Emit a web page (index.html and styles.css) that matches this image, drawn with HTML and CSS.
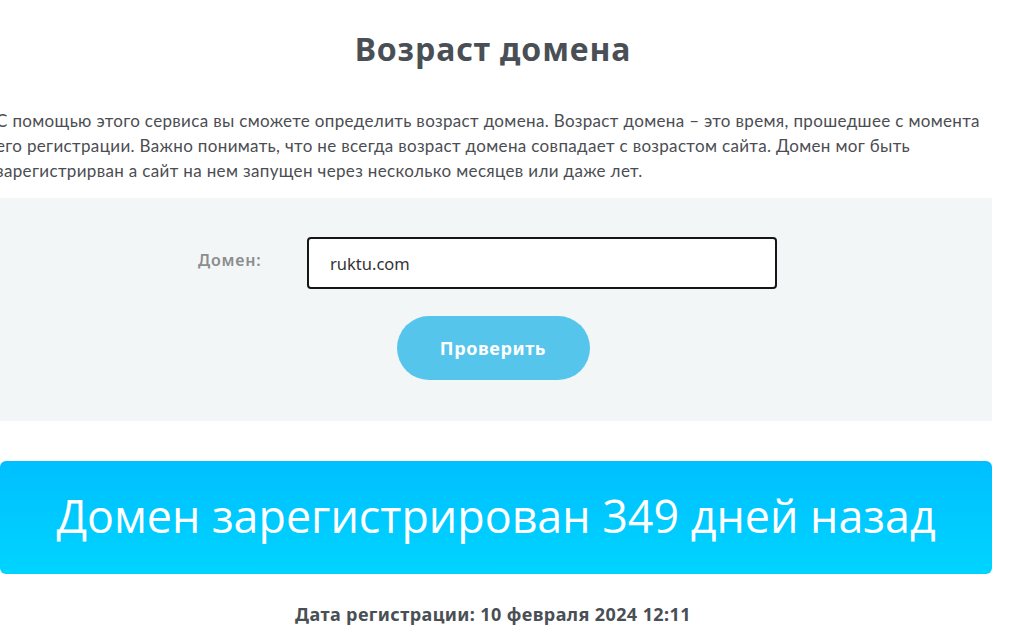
FILE: index.html
```html
<!DOCTYPE html>
<html lang="ru">
<head>
<meta charset="utf-8">
<title>Возраст домена</title>
<link rel="stylesheet" href="styles.css">
</head>
<body>
<main class="page">
  <h1 class="title">Возраст домена</h1>
  <p class="intro">С помощью этого сервиса вы сможете определить возраст домена. Возраст домена – это время, прошедшее с момента его регистрации. Важно понимать, что не всегда возраст домена совпадает с возрастом сайта. Домен мог быть зарегистрирван а сайт на нем запущен через несколько месяцев или даже лет.</p>
  <form class="check">
    <div class="row">
      <label class="label" for="domain">Домен:</label>
      <input class="field" id="domain" type="text" value="ruktu.com">
    </div>
    <button class="btn" type="button">Проверить</button>
  </form>
  <div class="result">Домен зарегистрирован 349 дней назад</div>
  <p class="date">Дата регистрации: 10 февраля 2024 12:11</p>
</main>
</body>
</html>
```
FILE: styles.css
```css
html, body {
  margin: 0;
  padding: 0;
  background: #fff;
  overflow: hidden;
}
.page {
  width: 998px;
  margin-left: -6px;
  font-family: "Open Sans", "Noto Sans", sans-serif;
  color: #4a4f55;
}
.title {
  margin: 0;
  padding-top: 29px;
  text-align: center;
  font-family: "Noto Sans", sans-serif;
  font-weight: 700;
  font-size: 32px;
  letter-spacing: 0.9px;
  line-height: 40px;
  color: #4a4f55;
}
.intro {
  margin: 39px 0 0;
  padding-left: 2px;
  font-family: "Lato", sans-serif;
  font-size: 17px;
  letter-spacing: 0.34px;
  line-height: 25px;
  color: #4b4d52;
}
.check {
  margin-top: 15px;
  margin-left: 6px;
  background: #f3f6f7;
  height: 223px;
  box-sizing: border-box;
  padding-top: 39px;
  display: flex;
  flex-direction: column;
  align-items: center;
}
.row {
  display: flex;
  align-items: flex-start;
  margin-left: -17px;
}
.label {
  width: 109px;
  padding-top: 12px;
  font-family: "Noto Sans", sans-serif;
  font-weight: 600;
  font-size: 16px;
  letter-spacing: 0.8px;
  color: #8b8d8f;
}
.field {
  width: 470px;
  height: 52px;
  box-sizing: border-box;
  border: 2px solid #161616;
  border-radius: 4px;
  padding: 0 21px;
  font-family: "Noto Sans", sans-serif;
  font-size: 16.5px;
  color: #333;
  background: #fff;
  outline: none;
}
.btn {
  margin-top: 27px;
  margin-left: -6px;
  width: 193px;
  height: 64px;
  border: none;
  border-radius: 32px;
  background: #55c5ec;
  color: #fff;
  font-family: "Noto Sans", sans-serif;
  font-weight: 700;
  font-size: 18px;
  letter-spacing: 0.6px;
}
.result {
  margin-top: 40px;
  margin-left: 6px;
  height: 113px;
  border-radius: 6px;
  background: linear-gradient(#00bfff, #00d4ff);
  color: #fff;
  display: flex;
  align-items: center;
  justify-content: center;
  font-family: "Open Sans", sans-serif;
  font-weight: 400;
  font-size: 44.8px;
  padding-bottom: 4px;
  box-sizing: border-box;
}
.date {
  margin: 28px 0 0;
  text-align: center;
  font-family: "Noto Sans", sans-serif;
  font-weight: 700;
  font-size: 18px;
  letter-spacing: 0.4px;
  color: #4a4f55;
}
```
